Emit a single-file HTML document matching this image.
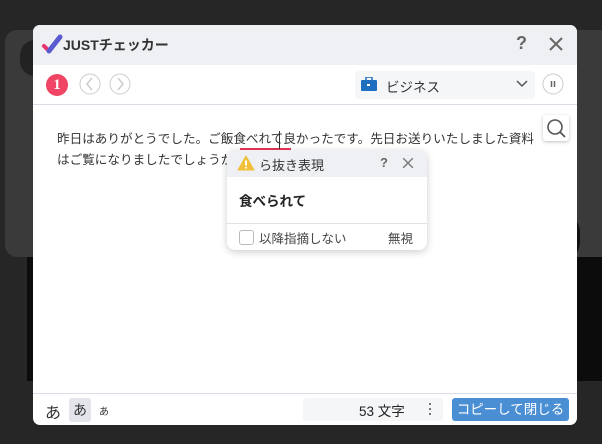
<!DOCTYPE html>
<html><head><meta charset="utf-8"><style>
*{margin:0;padding:0;box-sizing:border-box}
body{width:602px;height:444px;background:#262626;position:relative;overflow:hidden;font-family:"Liberation Sans","Noto Sans CJK JP",sans-serif;color:#333}
.abs{position:absolute}
</style></head><body>
<div class="abs" style="left:5px;top:30px;width:620px;height:227px;background:#3a3a3a;border-radius:12px"></div>
<div class="abs" style="left:20px;top:40px;width:30px;height:36px;background:#222;border-radius:18px"></div>
<div class="abs" style="left:27px;top:257px;width:580px;height:124px;background:#0c0c0c"></div>
<div class="abs" style="left:540px;top:212px;width:40px;height:50px;background:#111;border-radius:25px"></div>
<div class="abs" style="left:33px;top:25px;width:544px;height:400px;background:#fff;border-radius:7px;overflow:hidden">
 <div class="abs" style="left:0;top:0;width:544px;height:40px;background:#eef0f3"></div>
 <svg class="abs" style="left:8px;top:8px" width="22" height="22" viewBox="0 0 22 22"><path d="M3 13l5 5" stroke="#e8336b" stroke-width="4" stroke-linecap="round"/><path d="M8 18L19 4" stroke="#5b5bd0" stroke-width="5" stroke-linecap="round"/></svg>
 <div class="abs" style="left:30px;top:10px;font-size:14px;font-weight:bold;color:#333">JUSTチェッカー</div>
 <div class="abs" style="left:483px;top:8px;font-size:18px;color:#666;font-weight:bold">?</div>
 <svg class="abs" style="left:516px;top:12px" width="14" height="14"><path d="M1 1L13 13M13 1L1 13" stroke="#666" stroke-width="2"/></svg>
 <div class="abs" style="left:13px;top:49px;width:22px;height:22px;border-radius:50%;background:#f04564;color:#fff;font-weight:bold;font-size:15px;text-align:center;line-height:22px;font-family:'Liberation Serif',serif">1</div>
 <svg class="abs" style="left:46px;top:48px" width="22" height="22"><circle cx="11" cy="11" r="10" fill="none" stroke="#ccc"/><path d="M13 5l-5 6 5 6" fill="none" stroke="#ccc" stroke-width="1.5"/></svg>
 <svg class="abs" style="left:76px;top:48px" width="22" height="22"><circle cx="11" cy="11" r="10" fill="none" stroke="#ccc"/><path d="M9 5l5 6-5 6" fill="none" stroke="#ccc" stroke-width="1.5"/></svg>
 <div class="abs" style="left:322px;top:46px;width:180px;height:28px;background:#f5f6f8;border-radius:4px"></div>
 <svg class="abs" style="left:328px;top:52px" width="16" height="14"><rect x="5" y="0" width="6" height="4" fill="none" stroke="#1e6fc0" stroke-width="1.5"/><rect x="0" y="3" width="16" height="11" rx="1" fill="#1e6fc0"/><rect x="6" y="7" width="3" height="2" fill="#fff"/></svg>
 <div class="abs" style="left:353px;top:51px;font-size:13.5px;color:#333">ビジネス</div>
 <svg class="abs" style="left:483px;top:55px" width="12" height="8"><path d="M1 1l5 5 5-5" fill="none" stroke="#555" stroke-width="1.5"/></svg>
 <svg class="abs" style="left:509px;top:48px" width="22" height="22"><circle cx="11" cy="11" r="10" fill="#fff" stroke="#ccc"/><path d="M9.5 8v6M12.5 8v6" stroke="#666" stroke-width="1.5"/></svg>
 <div class="abs" style="left:0;top:79px;width:544px;height:1px;background:#dcdce6"></div>
 <div class="abs" style="left:510px;top:90px;width:26px;height:26px;background:#fff;border-radius:3px;box-shadow:0 1px 3px rgba(0,0,0,.25)"></div>
 <svg class="abs" style="left:512px;top:92px" width="22" height="22"><circle cx="10" cy="10" r="7" fill="none" stroke="#555" stroke-width="1.6"/><path d="M15 15l5 5" stroke="#555" stroke-width="1.8"/></svg>
 <div class="abs" style="left:24px;top:104px;font-size:12.6px;line-height:21px;color:#333;white-space:nowrap">昨日はありがとうでした。ご飯食べれて良かったです。先日お送りいたしました資料<br>はご覧になりましたでしょうか</div>
 <div class="abs" style="left:207px;top:123px;width:51px;height:2px;background:#e8335a"></div>
 <div class="abs" style="left:246px;top:106px;width:1px;height:18px;background:#333"></div>
 <div class="abs" style="left:0;top:368px;width:544px;height:1px;background:#dcdce6"></div>
 <div class="abs" style="left:12px;top:374px;font-size:16px;color:#333">あ</div>
 <div class="abs" style="left:36px;top:373px;width:22px;height:24px;background:#e4e5ea;border-radius:3px;font-size:14px;text-align:center;line-height:24px">あ</div>
 <div class="abs" style="left:66px;top:378px;font-size:10px">あ</div>
 <div class="abs" style="left:270px;top:373px;width:140px;height:23px;background:#f5f6f8;border-radius:3px"></div>
 <div class="abs" style="left:326px;top:375px;font-size:13.5px;color:#222">53 文字</div>
 <div class="abs" style="left:396px;top:378px;width:2px;height:2px;background:#777;box-shadow:0 5px 0 #777,0 10px 0 #777"></div>
 <div class="abs" style="left:419px;top:373px;width:117px;height:23px;background:#4a8fd4;border-radius:3px;color:#fff;font-size:13.5px;text-align:center;line-height:23px">コピーして閉じる</div>
</div>
<div class="abs" style="left:227px;top:150px;width:200px;height:100px;background:#fff;border-radius:8px;box-shadow:0 2px 8px rgba(0,0,0,.2);overflow:hidden">
 <div class="abs" style="left:0;top:0;width:200px;height:27px;background:#eef0f3"></div>
 <svg class="abs" style="left:10px;top:5px" width="18" height="16"><path d="M9 1L17 15H1z" fill="#f2bf3a" stroke="#f2bf3a" stroke-linejoin="round"/><path d="M9 5.5v5" stroke="#fff" stroke-width="2"/><circle cx="9" cy="12.8" r="1" fill="#fff"/></svg>
 <div class="abs" style="left:32px;top:5px;font-size:13px;color:#333">ら抜き表現</div>
 <div class="abs" style="left:153px;top:5px;font-size:13px;color:#666;font-weight:bold">?</div>
 <svg class="abs" style="left:176px;top:8px" width="10" height="10"><path d="M0 0L10 10M10 0L0 10" stroke="#777" stroke-width="1.4"/></svg>
 <div class="abs" style="left:12px;top:40px;font-size:13.5px;font-weight:bold;color:#222">食べられて</div>
 <div class="abs" style="left:0;top:73px;width:200px;height:1px;background:#e0e0e6"></div>
 <div class="abs" style="left:12px;top:80px;width:15px;height:15px;border:1.5px solid #bbb;border-radius:3px"></div>
 <div class="abs" style="left:32px;top:78px;font-size:12.5px;color:#444">以降指摘しない</div>
 <div class="abs" style="left:161px;top:78px;font-size:12.5px;color:#444">無視</div>
</div>
</body></html>
